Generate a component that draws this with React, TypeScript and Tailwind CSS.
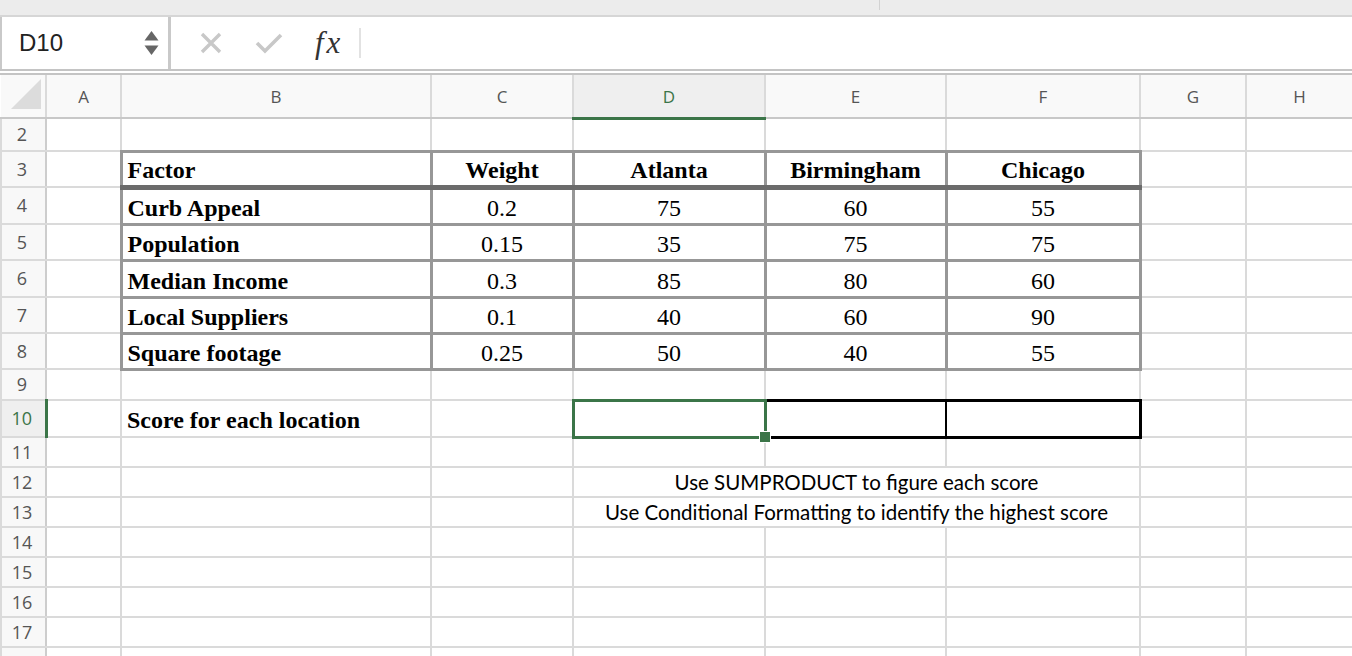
import React from 'react'

const serif = "font-['Liberation_Serif',serif] text-[24px] leading-[26px] text-black"
const grid = 'border-2 border-[#dadada] p-0'
const tbl = 'border-[3px] border-[#979797] p-0 align-bottom pb-[2px]'
const tblHead = 'border-[3px] border-b-[5px] border-[#979797] border-b-[#6b6b6b] p-0 align-bottom pb-[2px]'
const rowHead = "border-2 border-[#dadada] border-r-[#cdcdcd] bg-[#f8f8f8] p-0 pr-[3px] text-center font-['Open_Sans',sans-serif] text-[18px] text-[#555]"
const colHead = "border-2 border-[#dadada] border-b-[#c8c8c8] border-t-0 bg-[#f9f9f9] p-0 pt-[2px] text-center font-['Open_Sans',sans-serif] text-[17px] text-[#555]"

const data = [
  ['Curb Appeal', '0.2', '75', '60', '55'],
  ['Population', '0.15', '35', '75', '75'],
  ['Median Income', '0.3', '85', '80', '60'],
  ['Local Suppliers', '0.1', '40', '60', '90'],
  ['Square footage', '0.25', '50', '40', '55'],
]
const rowHeights = ['h-[37px]', 'h-[36px]', 'h-[37px]', 'h-[36px]', 'h-[36px]']

function FormulaBar() {
  return (
    <div className="flex h-[58px] border-b-[6px] border-double border-[#c4c4c4] bg-white">
      <div className="flex w-[171px] items-center justify-between border-l-2 border-r-[3px] border-[#c9c9c9] pl-[17px] pr-[9px]">
        <span className="text-[24px] text-[#222]">D10</span>
        <svg width="15" height="27" viewBox="0 0 15 27">
          <path d="M7.5 1 L14.5 10.5 L0.5 10.5 Z" fill="#666" />
          <path d="M0.5 15.5 L14.5 15.5 L7.5 25 Z" fill="#666" />
        </svg>
      </div>
      <div className="flex items-center">
        <svg className="ml-[29px]" width="22" height="22" viewBox="0 0 22 22">
          <path d="M2 2 L20 20 M20 2 L2 20" stroke="#c8c8c8" strokeWidth="3.4" />
        </svg>
        <svg className="ml-[33px]" width="28" height="22" viewBox="0 0 28 22">
          <path d="M2 11 L10 19 L26 3" stroke="#c8c8c8" strokeWidth="3.6" fill="none" />
        </svg>
        <span className="ml-[32px] font-['Liberation_Serif',serif] text-[31px] italic tracking-[3px] text-[#333]">fx</span>
        <div className="ml-[16px] h-[30px] w-[2px] bg-[#e2e2e2]" />
      </div>
    </div>
  )
}

function Sheet() {
  return (
    <table className="w-[1352px] table-fixed">
      <colgroup>
        <col className="w-[45px]" />
        <col className="w-[75px]" />
        <col className="w-[310px]" />
        <col className="w-[142px]" />
        <col className="w-[192px]" />
        <col className="w-[181px]" />
        <col className="w-[194px]" />
        <col className="w-[106px]" />
        <col className="w-[107px]" />
      </colgroup>
      <tbody>
        <tr className="h-[43px]">
          <td className="border-2 border-t-0 border-l-0 border-[#dadada] border-b-[#c8c8c8] bg-[#f9f9f9] p-0">
            <div className="flex h-full items-end justify-end pr-[4px] pb-[4px]">
              <svg width="30" height="30" viewBox="0 0 30 30">
                <path d="M30 0 L30 30 L0 30 Z" fill="#dcdcdc" />
              </svg>
            </div>
          </td>
          <td className={colHead}>A</td>
          <td className={colHead}>B</td>
          <td className={colHead}>C</td>
          <td className="border-2 border-t-0 border-[#dadada] border-b-[3px] border-b-[#3b7548] bg-[#efefef] p-0 pt-[2px] text-center font-['Open_Sans',sans-serif] text-[17px] text-[#3b7548]">D</td>
          <td className={colHead}>E</td>
          <td className={colHead}>F</td>
          <td className={colHead}>G</td>
          <td className={colHead}>H</td>
        </tr>
        <tr className="h-[33px]">
          <td className={rowHead}>2</td>
          <td className={grid} />
          <td className={grid} />
          <td className={grid} />
          <td className={grid} />
          <td className={grid} />
          <td className={grid} />
          <td className={grid} />
          <td className={grid} />
        </tr>
        <tr className="h-[36px]">
          <td className={rowHead}>3</td>
          <td className={grid} />
          <td className={`${tblHead} ${serif} pl-[5px] font-bold`}>Factor</td>
          <td className={`${tblHead} ${serif} text-center font-bold`}>Weight</td>
          <td className={`${tblHead} ${serif} text-center font-bold`}>Atlanta</td>
          <td className={`${tblHead} ${serif} text-center font-bold`}>Birmingham</td>
          <td className={`${tblHead} ${serif} text-center font-bold`}>Chicago</td>
          <td className={grid} />
          <td className={grid} />
        </tr>
        {data.map((r, i) => (
          <tr key={r[0]} className={rowHeights[i]}>
            <td className={rowHead}>{i + 4}</td>
            <td className={grid} />
            <td className={`${tbl} ${serif} pl-[5px] font-bold`}>{r[0]}</td>
            <td className={`${tbl} ${serif} text-center`}>{r[1]}</td>
            <td className={`${tbl} ${serif} text-center`}>{r[2]}</td>
            <td className={`${tbl} ${serif} text-center`}>{r[3]}</td>
            <td className={`${tbl} ${serif} text-center`}>{r[4]}</td>
            <td className={grid} />
            <td className={grid} />
          </tr>
        ))}
        <tr className="h-[31px]">
          <td className={rowHead}>9</td>
          <td className={grid} />
          <td className={grid} />
          <td className={grid} />
          <td className={grid} />
          <td className={grid} />
          <td className={grid} />
          <td className={grid} />
          <td className={grid} />
        </tr>
        <tr className="h-[37px]">
          <td className="border-2 border-[#dadada] border-r-[3px] border-r-[#3b7548] bg-[#efefef] p-0 pr-[3px] text-center font-['Open_Sans',sans-serif] text-[18px] text-[#3b7548]">10</td>
          <td className={grid} />
          <td className={`${grid} ${serif} align-bottom pb-[3px] pl-[5px] font-bold`}>Score for each location</td>
          <td className={grid} />
          <td className="relative border-[3px] border-[#3b7548] p-0">
            <span className="absolute -right-[7px] -bottom-[7px] z-10 h-[12px] w-[12px] border-[1.5px] border-white bg-[#3b7548]" />
          </td>
          <td className="border-[3px] border-r-2 border-black p-0" />
          <td className="border-[3px] border-l-2 border-black p-0" />
          <td className={grid} />
          <td className={grid} />
        </tr>
        {[11, 12, 13, 14, 15, 16, 17, 18].map((n) => (
          <tr key={n} className="h-[30px]">
            <td className={rowHead}>{n}</td>
            <td className={grid} />
            <td className={grid} />
            <td className={grid} />
            {n === 12 || n === 13 ? (
              <td colSpan={3} className={`${grid} text-center align-bottom pb-[1px] font-['Lato',sans-serif] text-[20.5px] leading-[25px] text-black`}>
                {n === 12 ? 'Use SUMPRODUCT to figure each score' : 'Use Conditional Formatting to identify the highest score'}
              </td>
            ) : (
              <>
                <td className={grid} />
                <td className={grid} />
                <td className={grid} />
              </>
            )}
            <td className={grid} />
            <td className={grid} />
          </tr>
        ))}
      </tbody>
    </table>
  )
}

export default function App() {
  return (
    <div className="h-[656px] w-[1352px] overflow-hidden bg-white font-['Liberation_Sans',sans-serif]">
      <div className="flex h-[17px] border-b-2 border-[#d6d6d6] bg-[#ececec]">
        <div className="ml-[879px] h-[10px] w-px bg-[#d2d2d2]" />
      </div>
      <FormulaBar />
      <Sheet />
    </div>
  )
}
